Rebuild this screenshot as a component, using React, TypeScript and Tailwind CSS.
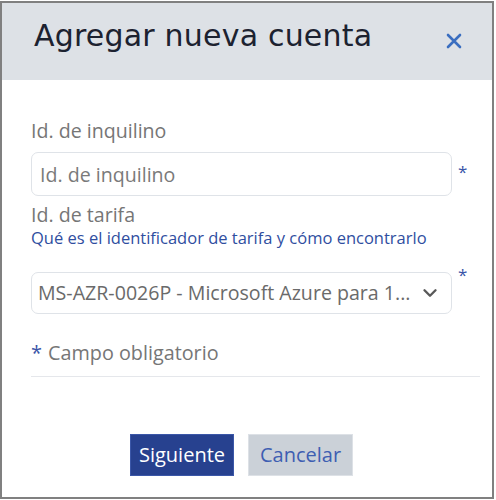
import { ChevronDown } from "lucide-react";

const sans = { fontFamily: '"Open Sans", "Noto Sans", sans-serif' };

function Star({ className = "" }: { className?: string }) {
  return <span className={`text-[#3b55a8] text-[17px] leading-none ${className}`}>*</span>;
}

export default function App() {
  return (
    <div className="w-[496px] h-[500px] bg-white pt-px">
      <div
        className="w-[494px] h-[498px] border-2 border-[#808080] flex flex-col"
        style={sans}
      >
        <div className="h-[77px] bg-[#dde1e6] flex items-center justify-between pl-[32px] pr-[30px] pb-[12px]">
          <h1
            className="text-[30px] text-[#1c2230] leading-none tracking-[0.2px]"
            style={{ fontFamily: '"DejaVu Sans", sans-serif' }}
          >
            Agregar nueva cuenta
          </h1>
          <svg width="16" height="16" viewBox="0 0 16 16" className="mt-[10px]">
            <path d="M2 2 L14 14 M14 2 L2 14" stroke="#3a6ec0" strokeWidth="2.6" strokeLinecap="round" />
          </svg>
        </div>

        <div className="flex flex-col pl-[29px] pt-[38px]">
          <label className="text-[19.6px] leading-[26px] text-[#767676]">Id. de inquilino</label>
          <div className="flex items-center gap-[6px] mt-[8px]">
            <input
              placeholder="Id. de inquilino"
              className="w-[421px] shrink-0 h-[44px] rounded-[7px] border border-[#dfe3e8] px-[8px] text-[19.6px] text-[#333] placeholder:text-[#7a7a7a] outline-none"
            />
            <Star className="-mt-[6px]" />
          </div>

          <label className="text-[19.6px] leading-[26px] text-[#767676] mt-[6px]">Id. de tarifa</label>
          <a className="text-[16.5px] leading-[20px] text-[#2f4e9f]">
            Qué es el identificador de tarifa y cómo encontrarlo
          </a>

          <div className="flex items-start gap-[6px] mt-[24px]">
            <div className="w-[421px] shrink-0 h-[42px] rounded-[7px] border border-[#dfe3e8] flex items-center justify-between pl-[6px] pr-[10px]">
              <span className="text-[19.6px] text-[#6a6a6a] whitespace-nowrap">
                MS-AZR-0026P - Microsoft Azure para 1...
              </span>
              <ChevronDown size={22} strokeWidth={2.6} className="text-[#595959]" />
            </div>
            <Star className="-mt-[6px]" />
          </div>

          <div className="flex items-baseline gap-[6px] mt-[26px]">
            <Star className="text-[20px]" />
            <span className="text-[19.8px] leading-[26px] text-[#767676]">Campo obligatorio</span>
          </div>
          <div className="h-px bg-[#e5e7eb] w-[449px] mt-[10px]" />

          <div className="flex gap-[14px] mt-[57px] pl-[99px]">
            <button className="w-[104px] h-[42px] bg-[#27418f] text-white text-[20px] border border-[#3b57a8]">
              Siguiente
            </button>
            <button className="w-[105px] h-[42px] bg-[#cbd1d8] text-[#3e5eb2] text-[20px] border border-[#dde1e6]">
              Cancelar
            </button>
          </div>
        </div>
      </div>
    </div>
  );
}
